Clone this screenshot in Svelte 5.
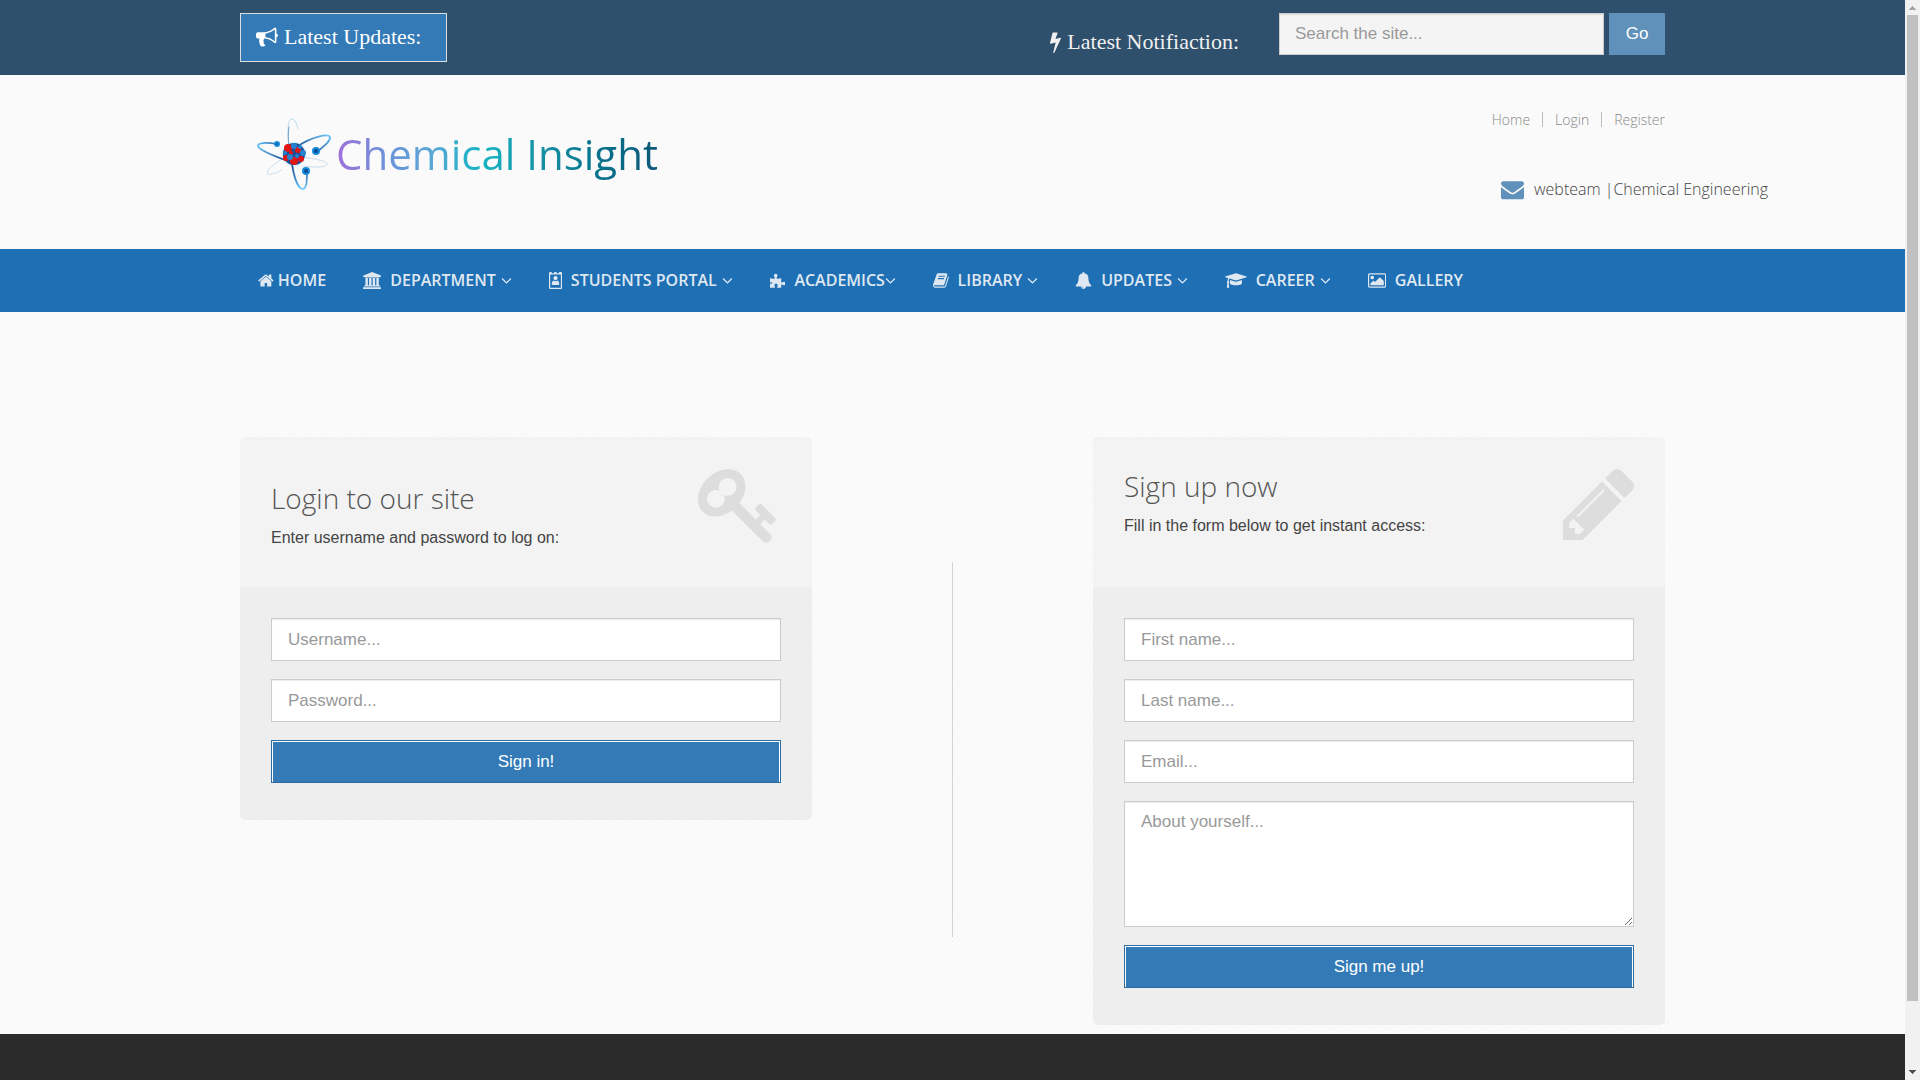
<script>
  const paths = {
    bullhorn: 'M1664 640q53 0 90.5 37.5t37.5 90.5-37.5 90.5-90.5 37.5v384q0 52-38 90t-90 38q-417-347-812-380-58 19-91 66t-31 100.5 40 92.5q-20 33-23 65.5t6 58 33.5 55 48 50 61.5 50.5q-29 58-111.5 83t-168.5 11.5-132-55.5q-7-23-29.5-87.5t-32-94.5-23-89-15-101 3.5-98.5 22-110.5h-122q-66 0-113-47t-47-113v-192q0-66 47-113t113-47h480q435 0 896-384 52 0 90 38t38 90v384zm-128 604v-954q-394 302-768 343v270q377 42 768 341z',
    bolt: 'M1333 566q18 20 7 44l-540 1157q-13 25-42 25-4 0-14-2-17-5-25.5-19t-4.5-30l197-808-406 101q-4 1-12 1-18 0-31-11-18-15-13-39l201-825q4-14 16-23t28-9h328q19 0 32 12.5t13 29.5q0 8-5 18l-171 463 396-98q8-2 12-2 19 0 34 15z',
    envelope: 'M1792 710v794q0 66-47 113t-113 47h-1472q-66 0-113-47t-47-113v-794q44 49 101 87 362 246 497 345 57 42 92.5 65.5t94.5 48 110 24.5h2q51 0 110-24.5t94.5-48 92.5-65.5q170-123 498-345 57-39 100-87zm0-294q0 79-49 151t-122 123q-376 261-468 325-10 7-42.5 31t-54 38.5-52 32.5-57.5 27-50 9h-2q-23 0-50-9t-57.5-27-52-32.5-54-38.5-42.5-31q-91-64-262-182.5t-205-142.5q-62-42-117-115.5t-55-136.5q0-78 41.5-130t118.5-52h1472q65 0 112.5 47t47.5 113z',
    home: 'M1472 992v480q0 26-19 45t-45 19h-384v-384h-256v384h-384q-26 0-45-19t-19-45v-480q0-1 .5-3t.5-3l575-474 575 474q1 2 1 6zm223-69l-62 74q-8 9-21 11h-3q-13 0-21-7l-692-577-692 577q-12 8-24 7-13-2-21-11l-62-74q-8-10-7-23.5t11-21.5l719-599q32-26 76-26t76 26l244 204v-195q0-14 9-23t23-9h192q14 0 23 9t9 23v408l219 182q10 8 11 21.5t-7 23.5z',
    university: 'M960 0l960 384v128h-128q0 26-20.5 45t-48.5 19h-1526q-28 0-48.5-19t-20.5-45h-128v-128zm-704 640h256v768h128v-768h256v768h128v-768h256v768h128v-768h256v768h59q28 0 48.5 19t20.5 45v64h-1664v-64q0-26 20.5-45t48.5-19h59v-768zm1595 960q28 0 48.5 19t20.5 45v128h-1920v-128q0-26 20.5-45t48.5-19h1782z',
    badge: 'M0 128q0-52 38-90t90-38h160v128h256v-128h256v128h256v-128h192q52 0 90 38t38 90v1536q0 52-38 90t-90 38h-1120q-52 0-90-38t-38-90zm128 128v1408h1120v-1408zm336 384q0-94 65-159t159-65 159 65 65 159-65 159-159 65-159-65-65-159zm-176 624q0-300 190-370 90 82 210 82t210-82q190 70 190 370 0 112-90 112h-620q-90 0-90-112z',
    puzzle: 'M0 660q180 50 420 40 110-10 80-110-90-100-90-220 0-190 190-190t190 190q0 120-90 220-30 100 80 110 220 10 400-40v360q0 110 110 80 60-80 170-80 200 0 200 190t-200 190q-110 0-170-80-110-30-110 80v260h-390q-60 0-40-60 60-110 60-220 0-170-170-170t-170 170q0 110 60 220 20 60-40 60h-490v-380q0-90 80-60 90 60 140 0t0-120-140 0q-80 40-80-40z',
    book: 'M1703 478q40 57 18 129l-275 906q-19 64-76.5 107.5t-122.5 43.5h-923q-77 0-148.5-53.5t-99.5-131.5q-24-67-2-127 0-4 3-27t4-37q1-8-3-21.5t-3-19.5q2-11 8-21t16.5-23.5 16.5-23.5q23-38 45-91.5t30-91.5q3-10 .5-30t-.5-28q3-11 17-28t17-23q21-36 42-92t25-90q1-9-2.5-32t.5-28q4-13 22-30.5t22-22.5q19-26 42.5-84.5t27.5-96.5q1-8-3-25.5t-2-26.5q2-8 9-18t18-23 17-21q8-12 16.5-30.5t15-35 16-36 19.5-32 26.5-23.5 36-11.5 47.5 5.5l-1 3q38-9 51-9h761q74 0 114 56t18 130l-274 906q-36 119-71.5 153.5t-128.5 34.5h-869q-27 0-38 15-11 16-1 43 24 70 144 70h923q29 0 56-15.5t35-41.5l300-987q7-22 5-57 38 15 59 43zm-1064 2q-4 13 2 22.5t20 9.5h608q13 0 25.5-9.5t16.5-22.5l21-64q4-13-2-22.5t-20-9.5h-608q-13 0-25.5 9.5t-16.5 22.5zm-83 256q-4 13 2 22.5t20 9.5h608q13 0 25.5-9.5t16.5-22.5l21-64q4-13-2-22.5t-20-9.5h-608q-13 0-25.5 9.5t-16.5 22.5z',
    bell: 'M912 1696q0-16-16-16-59 0-101.5-42.5t-42.5-101.5q0-16-16-16t-16 16q0 73 51.5 124.5t124.5 51.5q16 0 16-16zm816-288q0 52-38 90t-90 38h-448q0 106-75 181t-181 75-181-75-75-181h-448q-52 0-90-38t-38-90q50-42 91-88t85-119.5 74.5-158.5 50-206 19.5-260q0-152 117-282.5t307-158.5q-8-19-8-39 0-40 28-68t68-28 68 28 28 68q0 20-8 39 190 28 307 158.5t117 282.5q0 139 19.5 260t50 206 74.5 158.5 85 119.5 91 88z',
    cap: 'M1774 836l18 316q4 69-82 128t-235 93.5-323 34.5-323-34.5-235-93.5-82-128l18-316 574 181q22 7 48 7t48-7zm530-324q0 23-22 31l-1120 352q-4 1-10 1t-10-1l-652-206q-43 34-71 111.5t-34 178.5q63 36 63 109 0 69-58 107l58 433q2 14-8 25-9 11-24 11h-192q-15 0-24-11-10-11-8-25l58-433q-58-38-58-107 0-73 65-111 11-207 98-330l-333-104q-22-8-22-31t22-31l1120-352q4-1 10-1t10 1l1120 352q22 8 22 31z',
    picture: 'M640 576q0 80-56 136t-136 56-136-56-56-136 56-136 136-56 136 56 56 136zm1024 384v448h-1408v-192l320-320 160 160 512-512zm96-704h-1600q-13 0-22.5 9.5t-9.5 22.5v1216q0 13 9.5 22.5t22.5 9.5h1600q13 0 22.5-9.5t9.5-22.5v-1216q0-13-9.5-22.5t-22.5-9.5zm160 32v1216q0 66-47 113t-113 47h-1600q-66 0-113-47t-47-113v-1216q0-66 47-113t113-47h1600q66 0 113 47t47 113z',
    angle: 'M1395 736q0 13-10 23l-466 466q-10 10-23 10t-23-10l-466-466q-10-10-10-23t10-23l50-50q10-10 23-10t23 10l393 393 393-393q10-10 23-10t23 10l50 50q10 10 10 23z',
    key: 'M832 512q0-80-56-136t-136-56-136 56-56 136q0 42 19 83-41-19-83-19-80 0-136 56t-56 136 56 136 136 56 136-56 56-136q0-42-19-83 41 19 83 19 80 0 136-56t56-136zm851 704q0 17-49 66t-66 49q-9 0-28.5-16t-36.5-33-38.5-40-24.5-26l-96 96 220 220q28 28 28 68 0 42-39 81t-81 39q-40 0-68-28l-671-671q-176 131-365 131-163 0-265.5-102.5t-102.5-265.5q0-160 95-313t248-248 313-95q163 0 265.5 102.5t102.5 265.5q0 189-131 365l355 355 96-96q-3-3-26-24.5t-40-38.5-33-36.5-16-28.5q0-17 49-66t66-49q13 0 23 10 6 6 46 44.5t82 79.5 86.5 86 73 78 28.5 41z',
    pencil: 'M491 1536l91-91-235-235-91 91v107h128v128h107zm523-928q0-22-22-22-10 0-17 7l-542 542q-7 7-7 17 0 22 22 22 10 0 17-7l542-542q7-7 7-17zm-54-192l416 416-832 832h-416v-416zm683 96q0 53-37 90l-166 166-416-416 166-165q36-38 90-38 53 0 91 38l235 234q37 39 37 91z'
  };
  const boxes = {
    home: '64 0 1664 1792',
    university: '0 0 1920 1792',
    badge: '0 0 1376 1792',
    puzzle: '0 0 1664 1792',
    book: '64 0 1664 1792',
    cap: '0 0 2304 1792',
    picture: '0 0 1920 1792',
    angle: '320 0 1152 1792',
    bolt: '448 0 896 1792',
    key: '0 128 1684 1592',
    pencil: '128 149 1515 1515'
  };
  const menu = [
    { label: 'HOME', icon: 'home', tight: true },
    { label: 'DEPARTMENT', icon: 'university', more: true },
    { label: 'STUDENTS PORTAL', icon: 'badge', more: true },
    { label: 'ACADEMICS', icon: 'puzzle', more: true, joined: true },
    { label: 'LIBRARY', icon: 'book', more: true },
    { label: 'UPDATES', icon: 'bell', more: true },
    { label: 'CAREER', icon: 'cap', more: true },
    { label: 'GALLERY', icon: 'picture' }
  ];
</script>

{#snippet icon(name)}
  <svg class="icon {name}" viewBox={boxes[name] ?? '0 0 1792 1792'} aria-hidden="true"><path d={paths[name]} /></svg>
{/snippet}

<div class="window">
  <div class="page">
    <div class="topbar">
      <div class="container topbar-row">
        <button class="updates" type="button">{@render icon('bullhorn')} Latest Updates:</button>
        <div class="notice">{@render icon('bolt')} Latest Notifiaction:</div>
        <form class="search">
          <input type="text" placeholder="Search the site..." aria-label="Search the site" />
          <button type="button">Go</button>
        </form>
      </div>
    </div>

    <header class="container header">
      <a class="logo" href="#home" aria-label="Chemical Insight">
        <svg class="atom" viewBox="0 0 76 74" aria-hidden="true">
          <defs>
            <linearGradient id="arm-left" x1="0" y1="0" x2="1" y2="0">
              <stop offset="0" stop-color="#62bdf5" /><stop offset="1" stop-color="#143f86" />
            </linearGradient>
            <linearGradient id="arm-right" x1="1" y1="0" x2="0" y2="1">
              <stop offset="0" stop-color="#6cc5fa" /><stop offset="1" stop-color="#123c80" />
            </linearGradient>
            <linearGradient id="arm-down" x1="0" y1="0" x2="0" y2="1">
              <stop offset="0" stop-color="#123c80" /><stop offset="1" stop-color="#70c8ff" />
            </linearGradient>
            <radialGradient id="glow">
              <stop offset="0.6" stop-color="#43b9f5" stop-opacity="0.9" /><stop offset="1" stop-color="#8fdcff" stop-opacity="0" />
            </radialGradient>
          </defs>
          <g fill="none" stroke-linecap="round">
            <path d="M33 30C31 12 32 1 36 2c3 0 5 5 6 10" stroke="#bddcf0" stroke-width="1" />
            <path d="M33 30c-1-8-1-14 0-20" stroke="#6c9dc8" stroke-width="1" />
            <path d="M28 41C16 48 9 54 12 57c2 1 9-1 14-4" stroke="#c9e0ee" stroke-width="1" />
            <path d="M45 40c16 2 26 4 26 7 0 3-10 4-24 2" stroke="#c9dce8" stroke-width="1" />
            <path d="M21 27C9 25 2 26 2 29c1 4 13 9 30 15" stroke="url(#arm-left)" stroke-width="1.7" />
            <path d="M42 29c14-9 30-13 32-9 1 4-6 9-13 15" stroke="url(#arm-right)" stroke-width="1.7" />
            <path d="M36 47c2 13 6 25 11 25 4-1 4-9 4-18" stroke="url(#arm-down)" stroke-width="1.7" />
          </g>
          <circle cx="38" cy="37" r="13" fill="url(#glow)" />
          <circle cx="38" cy="37" r="11" fill="#1d4e96" />
          <g fill="#e31616">
            <circle cx="32" cy="31" r="4" /><circle cx="42" cy="33" r="3" /><circle cx="30" cy="41" r="3" />
            <circle cx="38" cy="44" r="4" /><circle cx="45" cy="42" r="3" /><circle cx="35" cy="36" r="2" />
          </g>
          <g fill="#2484d2">
            <circle cx="38" cy="29" r="3" /><circle cx="47" cy="36" r="3" /><circle cx="34" cy="40" r="3" />
            <circle cx="41" cy="39" r="2" /><circle cx="29" cy="36" r="2" /><circle cx="44" cy="30" r="2" />
          </g>
          <g fill="#168bd9">
            <circle cx="21" cy="27" r="3" /><circle cx="60" cy="34" r="4" /><circle cx="50" cy="54" r="4" />
          </g>
          <g fill="#0b4a93">
            <circle cx="21" cy="27" r="1" /><circle cx="60" cy="34" r="2" /><circle cx="50" cy="54" r="2" />
          </g>
        </svg>
        <span class="wordmark">Chemical Insight</span>
      </a>
      <div class="side">
        <nav class="quick" aria-label="Quick links">
          <a href="#home">Home</a><a href="#login">Login</a><a href="#register">Register</a>
        </nav>
        <a class="mail" href="#mail">{@render icon('envelope')}<span>webteam |Chemical Engineering</span></a>
      </div>
    </header>

    <nav class="mainnav" aria-label="Main">
      <ul class="container menu">
        {#each menu as item}
          <li>
            <a class:tight={item.tight} href="#{item.icon}">
              {@render icon(item.icon)}
              <span class="label" class:joined={item.joined}>{item.label}{#if item.more}{@render icon('angle')}{/if}</span>
            </a>
          </li>
        {/each}
      </ul>
    </nav>

    <main class="container forms">
      <section class="card login">
        <div class="card-top">
          <div>
            <h3>Login to our site</h3>
            <p>Enter username and password to log on:</p>
          </div>
          {@render icon('key')}
        </div>
        <form class="card-body">
          <input type="text" placeholder="Username..." aria-label="Username" />
          <input type="password" placeholder="Password..." aria-label="Password" />
          <button type="button">Sign in!</button>
        </form>
      </section>
      <div class="divider"></div>
      <section class="card">
        <div class="card-top">
          <div>
            <h3>Sign up now</h3>
            <p>Fill in the form below to get instant access:</p>
          </div>
          {@render icon('pencil')}
        </div>
        <form class="card-body">
          <input type="text" placeholder="First name..." aria-label="First name" />
          <input type="text" placeholder="Last name..." aria-label="Last name" />
          <input type="text" placeholder="Email..." aria-label="Email" />
          <textarea placeholder="About yourself..." aria-label="About yourself"></textarea>
          <button type="button">Sign me up!</button>
        </form>
      </section>
    </main>

    <footer></footer>
  </div>

  <div class="scrollbar" aria-hidden="true">
    <svg viewBox="0 0 15 15"><path d="M7 6h1v1h1v1h1v1h1v1H4V9h1V8h1V7h1z" fill="#a3a3a3" /></svg>
    <div class="thumb"></div>
    <svg viewBox="0 0 15 15"><path d="M4 5h7v1h-1v1H9v1H8v1H7V8H6V7H5V6H4z" fill="#505050" /></svg>
  </div>
</div>

<style>
  :global(body) { margin: 0; }
  * { box-sizing: border-box; }
  .window {
    display: flex;
    height: 100vh;
    overflow: hidden;
    font-family: "Open Sans", sans-serif;
    color: #444;
  }
  .page {
    flex: 1;
    min-width: 0;
    display: flex;
    flex-direction: column;
    background: repeating-linear-gradient(135deg, #fbfbfb 0 2px, #f9f9f9 2px 4px);
  }
  .container {
    width: 100%;
    max-width: 1425px;
    margin: 0 auto;
  }
  .icon {
    flex: none;
    width: auto;
    height: 1em;
    fill: currentColor;
  }
  a { color: inherit; text-decoration: none; }
  input, textarea, button {
    font: 17px/24px "Liberation Sans", Arial, sans-serif;
    border-radius: 0;
    margin: 0;
  }

  .topbar {
    background: #2f506c;
    padding: 13px 0;
  }
  .topbar-row {
    display: flex;
    align-items: flex-start;
    height: 49px;
  }
  .updates, .notice {
    display: flex;
    align-items: center;
    gap: 6px;
    font: 22px/32px "Liberation Serif", "Times New Roman", serif;
    color: #fff;
    white-space: nowrap;
  }
  .updates {
    height: 49px;
    padding: 0 25px 2px 15px;
    background: #337ab7;
    border: 1px solid #ddd;
  }
  .notice {
    margin: 13px 40px 0 auto;
    color: #f0f0f0;
  }
  .search { display: flex; gap: 5px; }
  .search input {
    width: 325px;
    height: 42px;
    padding: 0 15px;
    background: #f4f4f4;
    border: 1px solid #ccc;
    box-shadow: inset 0 1px 1px rgba(0, 0, 0, 0.08);
  }
  .search button {
    width: 56px;
    height: 42px;
    padding: 0;
    border: 0;
    background: #6091ba;
    color: #fff;
  }
  ::placeholder { color: #999; opacity: 1; }

  .header {
    display: flex;
    justify-content: space-between;
    height: 174px;
  }
  .logo {
    display: flex;
    align-items: flex-start;
    padding: 42px 0 0 16px;
  }
  .atom { width: 76px; height: 74px; }
  .wordmark {
    margin-left: 4px;
    font-size: 42px;
    font-weight: 400;
    line-height: 74px;
    color: transparent;
    background: linear-gradient(90deg, #a070d8 0, #6f8fdb 14%, #58a8d6 30%, #16b4c4 45%, #1791a5 63%, #08758f 80%, #0d5878 100%);
    -webkit-background-clip: text;
    background-clip: text;
  }
  .side {
    width: 164px;
    white-space: nowrap;
    font-weight: 300;
  }
  .quick {
    display: flex;
    justify-content: flex-end;
    margin-top: 34px;
    font-size: 14px;
    line-height: 22px;
    color: #888;
  }
  .quick a + a { margin-left: 12px; }
  .quick a + a::before {
    content: "";
    display: inline-block;
    height: 15px;
    margin-right: 12px;
    border-left: 1px solid #bbb;
    vertical-align: -2px;
  }
  .mail {
    display: flex;
    align-items: center;
    gap: 10px;
    margin-top: 46px;
    font-size: 16px;
    line-height: 24px;
  }
  .mail .icon { height: 23px; color: #6091ba; }

  .mainnav { background: #1f6fb5; }
  .menu {
    display: flex;
    gap: 37px;
    padding: 0 0 0 18px;
    list-style: none;
    font-size: 16px;
    font-weight: 600;
    line-height: 63px;
    color: #dfe8f1;
    white-space: nowrap;
  }
  .menu a { display: flex; align-items: center; gap: 9px; }
  .menu a.tight { gap: 4px; }
  .menu .icon { height: 17px; }
  .label { display: flex; align-items: center; gap: 5px; }
  .label.joined { gap: 0; }

  .forms {
    flex: none;
    display: grid;
    grid-template-columns: minmax(0, 572px) 1px minmax(0, 572px);
    justify-content: space-between;
    align-items: start;
    padding: 125px 0 9px;
  }
  .divider {
    height: 375px;
    margin-top: 125px;
    background: #d4d4d4;
  }
  .card {
    border-radius: 5px;
    overflow: hidden;
    background: #eee;
  }
  .card-top {
    display: flex;
    justify-content: space-between;
    align-items: flex-start;
    height: 150px;
    padding: 32px 31px 0;
    background: #f3f3f3;
  }
  .login .card-top > div { padding-top: 12px; }
  h3 {
    margin: 0;
    font-size: 28px;
    font-weight: 300;
    line-height: 34px;
    color: #555;
  }
  p {
    margin: 10px 0 0;
    font: 16px/26px "Liberation Sans", Arial, sans-serif;
  }
  .key, .pencil { color: #ddd; }
  .key { width: 78px; height: 74px; margin-right: 5px; }
  .pencil { width: 71px; height: 71px; }
  .card-body {
    display: flex;
    flex-direction: column;
    gap: 18px;
    padding: 31px 31px 37px;
  }
  .card-body input, textarea {
    width: 100%;
    height: 43px;
    padding: 0 16px;
    background: #fff;
    border: 1px solid #ccc;
    box-shadow: inset 0 1px 1px rgba(0, 0, 0, 0.08);
  }
  .card-body textarea {
    display: block;
    height: 126px;
    padding: 8px 16px;
  }
  .card-body button {
    height: 43px;
    padding: 0;
    background: #337ab7;
    border: 1px solid #2e6da4;
    box-shadow: inset 0 1px #fff, inset 1px 0 #fff, inset -1px 0 #fff;
    color: #fff;
  }
  footer { flex: 1; background: #2b2b2b; }

  .scrollbar {
    display: flex;
    flex-direction: column;
    width: 15px;
    background: #f1f1f1;
  }
  .scrollbar svg { flex: none; width: 15px; height: 15px; }
  .thumb {
    width: 11px;
    height: calc(100% - 94px);
    margin: 0 auto auto;
    background: #c1c1c1;
  }
</style>
